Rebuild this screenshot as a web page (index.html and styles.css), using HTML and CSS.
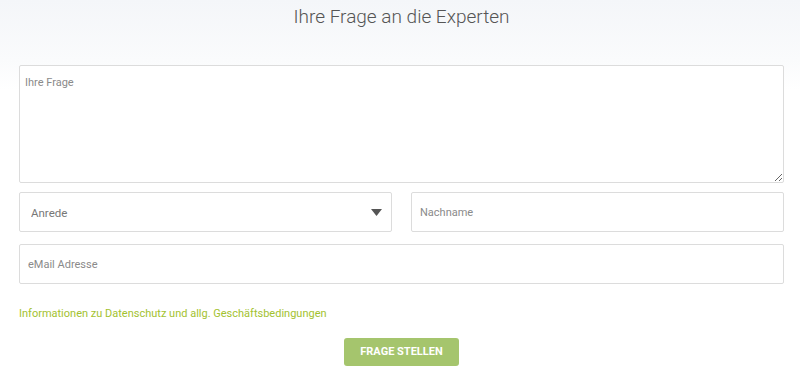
FILE: index.html
```html
<!DOCTYPE html>
<html lang="de">
<head>
    <meta charset="UTF-8">
    <meta name="viewport" content="width=device-width, initial-scale=1.0">
    <title>Ihre Frage an die Experten</title>
    <link rel="stylesheet" href="styles.css">
</head>
<body>
    <section class="expert-form">
        <h1 class="expert-title">Ihre Frage an die Experten</h1>

        <form class="form">
            <textarea class="field field-area" placeholder="Ihre Frage"></textarea>

            <div class="form-row">
                <div class="select-wrap">
                    <select class="field field-select">
                        <option>Anrede</option>
                        <option>Frau</option>
                        <option>Herr</option>
                    </select>
                    <svg class="select-arrow" width="11" height="7" viewBox="0 0 11 7"><path d="M0 0h11L5.5 7z" fill="#555"/></svg>
                </div>
                <input class="field" type="text" placeholder="Nachname">
            </div>

            <input class="field" type="email" placeholder="eMail Adresse">

            <a class="info-link" href="#">Informationen zu Datenschutz und allg. Geschäftsbedingungen</a>

            <div class="form-actions">
                <button class="btn-submit" type="submit">Frage stellen</button>
            </div>
        </form>
    </section>
</body>
</html>
```

FILE: styles.css
```css
/* Reset */
* {
    margin: 0;
    padding: 0;
    box-sizing: border-box;
}

body {
    font-family: Roboto, 'Liberation Sans', sans-serif;
    background: linear-gradient(to bottom, #f4f6f9 0, #fafbfc 60px, #ffffff 90px);
    min-height: 376px;
    color: #444;
}

/* Header */
.expert-form {
    padding: 0 16px 0 19px;
}

.expert-title {
    font-weight: 300;
    font-size: 19px;
    line-height: 22px;
    text-align: center;
    color: #555;
    padding-top: 6px;
    height: 65px;
}

/* Form */
.form {
    display: flex;
    flex-direction: column;
}

.field {
    display: block;
    width: 100%;
    height: 40px;
    border: 1px solid #dcdcdc;
    border-radius: 2px;
    background: #fff;
    font-family: Roboto, 'Liberation Sans', sans-serif;
    font-size: 11px;
    color: #555;
    padding: 0 8px;
    outline: none;
}

.field::placeholder {
    color: #8a8a8a;
}

.field-area {
    height: 118px;
    padding: 10px 5px;
    resize: vertical;
    margin-bottom: 9px;
}

.form-row {
    display: grid;
    grid-template-columns: 1fr 1fr;
    gap: 19px;
    margin-bottom: 12px;
}

.select-wrap {
    position: relative;
}

.field-select {
    appearance: none;
    -webkit-appearance: none;
    padding: 0 11px;
    color: #777;
    font-size: 11.5px;
    padding-top: 2px;
}

.select-arrow {
    position: absolute;
    right: 10px;
    top: 17px;
    pointer-events: none;
}

.info-link {
    margin-top: 23px;
    font-size: 11px;
    color: #a3c22f;
    text-decoration: none;
}

.form-actions {
    display: flex;
    justify-content: center;
    margin-top: 18px;
}

.btn-submit {
    width: 115px;
    height: 28px;
    border: none;
    border-radius: 3px;
    background: #a5c56d;
    color: #fff;
    font-family: Roboto, 'Liberation Sans', sans-serif;
    font-weight: 700;
    font-size: 11px;
    text-transform: uppercase;
    padding-bottom: 2px;
    cursor: pointer;
}
```
